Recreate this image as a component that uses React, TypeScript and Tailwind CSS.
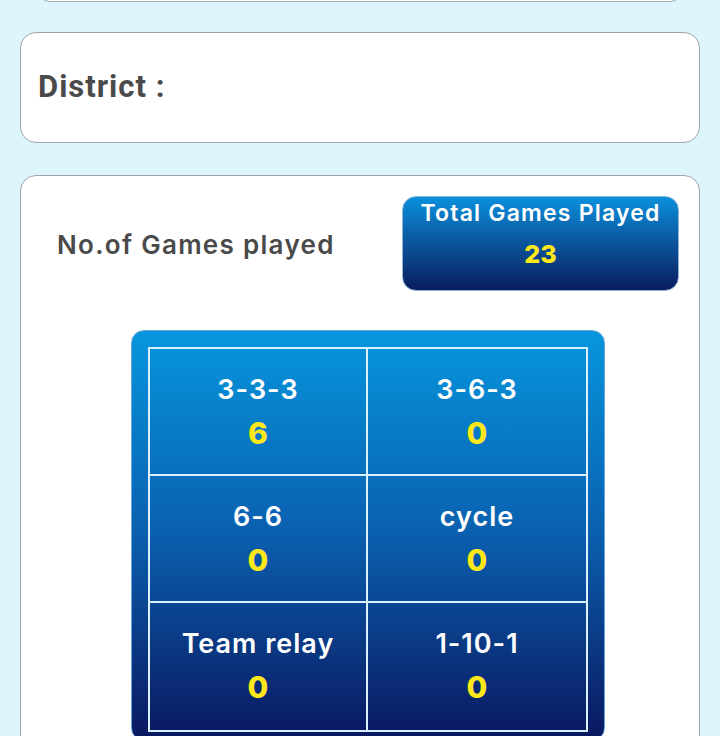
import React from "react";

const cells = [
  { label: "3-3-3", value: "6" },
  { label: "3-6-3", value: "0" },
  { label: "6-6", value: "0" },
  { label: "cycle", value: "0" },
  { label: "Team relay", value: "0" },
  { label: "1-10-1", value: "0" },
];

export default function App() {
  const poppins = { fontFamily: "Inter, 'Open Sans', sans-serif" };
  return (
    <div className="h-[736px] w-[720px] overflow-hidden bg-[#ddf6fd] px-5">
      <div className="mx-[15px] -mt-[14px] h-[16px] rounded-b-2xl border-[1.5px] border-[#a3abad] bg-white" />
      <div className="mt-[30px] flex h-[111px] items-center rounded-2xl border-[1.5px] border-[#9fa5a7] bg-white pl-[17px]">
        <span
          className="text-[31px] font-bold tracking-[1px] text-[#4a4a4a]"
          style={{ fontFamily: "Roboto, 'Liberation Sans', sans-serif" }}
        >
          District :
        </span>
      </div>
      <div className="mt-[32px] h-[600px] rounded-2xl border-[1.5px] border-[#9fa5a7] bg-white" style={poppins}>
        <div className="flex items-start justify-between pr-[20px] pt-[20px]">
          <span className="ml-[36px] mt-[29px] text-[26px] font-semibold tracking-[1.3px] text-[#4a4a4a]">
            No.of Games played
          </span>
          <div className="flex h-[95px] w-[277px] flex-col items-center rounded-[14px] border-[1.5px] border-[#8fb4d6] bg-gradient-to-b from-[#0a90dc] to-[#0a1c5f] pt-[2px]">
            <span className="text-[23px] font-semibold leading-[28px] tracking-[1.2px] text-white">Total Games Played</span>
            <span className="mt-[13px] text-[25px] font-extrabold leading-[29px] text-[#ffe81a]">23</span>
          </div>
        </div>
        <div className="ml-[110px] mt-[39px] w-[474px] rounded-[13px] border-[1.5px] border-[#6aa3d8] bg-gradient-to-b from-[#0896de] via-[#0a5fae] to-[#0a1760] px-[16px] pt-[16px] pb-[8px]">
          <div className="grid grid-cols-2 border-2 border-[#dcf1ff]">
            {cells.map((c, i) => (
              <div
                key={i}
                className={
                  "flex h-[127px] flex-col items-center pt-[26px] " +
                  (i % 2 === 0 ? "border-r-2 border-[#dcf1ff] " : "") +
                  (i < 4 ? "border-b-2 border-[#dcf1ff]" : "")
                }
              >
                <span className="text-[27px] font-semibold leading-[30px] tracking-[1px] text-white">{c.label}</span>
                <span className="mt-[13px] text-[30px] font-extrabold leading-[30px] text-[#ffe81a]">{c.value}</span>
              </div>
            ))}
          </div>
        </div>
      </div>
    </div>
  );
}
